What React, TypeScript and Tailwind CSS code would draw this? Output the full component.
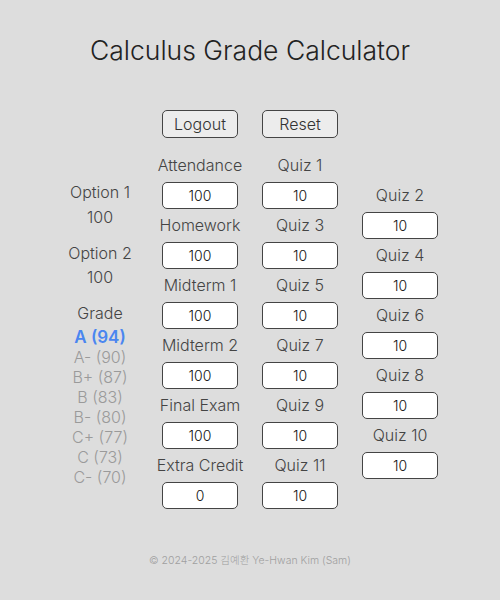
import React from "react";

const font = { fontFamily: "Inter, 'Noto Sans CJK KR', sans-serif" };

function Field({ label, value }: { label: string; value: string }) {
  return (
    <div className="flex flex-col items-center">
      <div className="h-[28px] flex items-center justify-center text-[16px] font-light text-[#444]">{label}</div>
      <div className="mt-[3px] mb-[2px] w-[76px] h-[27px] bg-white border border-[#444] rounded-[5px] flex items-center justify-center text-[14px] font-light text-[#111]">
        {value}
      </div>
    </div>
  );
}

export default function App() {
  const col2 = [
    ["Attendance", "100"],
    ["Homework", "100"],
    ["Midterm 1", "100"],
    ["Midterm 2", "100"],
    ["Final Exam", "100"],
    ["Extra Credit", "0"],
  ];
  const col3 = [1, 3, 5, 7, 9, 11].map((n) => [`Quiz ${n}`, "10"]);
  const col4 = [2, 4, 6, 8, 10].map((n) => [`Quiz ${n}`, "10"]);
  const grades = ["A- (90)", "B+ (87)", "B (83)", "B- (80)", "C+ (77)", "C (73)", "C- (70)"];
  return (
    <div className="w-[500px] h-[600px] bg-[#dddddd] flex flex-col items-center" style={font}>
      <h1 className="mt-[32px] h-[36px] leading-[36px] text-[26.5px] font-light text-[#222]">Calculus Grade Calculator</h1>
      <div className="mt-[42px] w-[400px] grid grid-cols-[100px_100px_100px_100px]">
        <div />
        <div className="flex justify-center">
          <div className="w-[76px] h-[28px] border border-[#444] rounded-[5px] bg-[#ececec] flex items-center justify-center text-[16px] font-light text-[#333]">Logout</div>
        </div>
        <div className="flex justify-center">
          <div className="w-[76px] h-[28px] border border-[#444] rounded-[5px] bg-[#ececec] flex items-center justify-center text-[16px] font-light text-[#333]">Reset</div>
        </div>
        <div />
      </div>
      <div className="mt-[13px] w-[400px] grid grid-cols-[100px_100px_100px_100px]">
        <div className="flex flex-col items-center text-[16px] font-light text-[#444] pt-[29px]">
          <div className="h-[24px] leading-[24px]">Option 1</div>
          <div className="h-[24px] leading-[24px] mt-[1px]">100</div>
          <div className="h-[24px] leading-[24px] mt-[12px]">Option 2</div>
          <div className="h-[24px] leading-[24px]">100</div>
          <div className="h-[24px] leading-[24px] mt-[12px]">Grade</div>
          <div className="h-[20px] leading-[20px] mt-[2px] font-semibold text-[#4a86f0] text-[17px]">A (94)</div>
          {grades.map((g) => (
            <div key={g} className="h-[20px] leading-[20px] text-[#9a9a9a]">{g}</div>
          ))}
        </div>
        <div className="flex flex-col">
          {col2.map(([l, v]) => <Field key={l} label={l} value={v} />)}
        </div>
        <div className="flex flex-col">
          {col3.map(([l, v]) => <Field key={l} label={l} value={v} />)}
        </div>
        <div className="flex flex-col pt-[30px]">
          {col4.map(([l, v]) => <Field key={l} label={l} value={v} />)}
        </div>
      </div>
      <div className="mt-auto mb-[31px] text-[10.5px] font-light text-[#a0a0a0]">© 2024-2025 김예환 Ye-Hwan Kim (Sam)</div>
    </div>
  );
}
